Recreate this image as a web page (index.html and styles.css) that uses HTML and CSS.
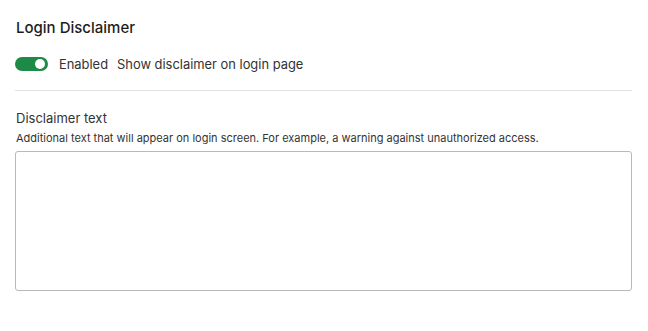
FILE: index.html
```html
<!DOCTYPE html>
<html lang="en">
<head>
    <meta charset="UTF-8">
    <title>Login Disclaimer</title>
    <link rel="stylesheet" href="styles.css">
</head>
<body>
<div class="panel">
    <h2 class="title">Login Disclaimer</h2>
    <div class="toggle-row">
        <span class="switch"><span class="knob"></span></span>
        <span class="state">Enabled</span>
        <span class="desc">Show disclaimer on login page</span>
    </div>
    <hr class="divider">
    <label class="label" for="disclaimer">Disclaimer text</label>
    <p class="help">Additional text that will appear on login screen. For example, a warning against unauthorized access.</p>
    <textarea id="disclaimer" class="field"></textarea>
</div>
</body>
</html>
```

FILE: styles.css
```css
/* reset */
body,h2,p,hr{margin:0;padding:0}
body{font-family: Inter, "Liberation Sans", sans-serif;color:#2b2b2b;background:#fff;}

.panel{
    padding:19px 16px 0 15px;
}
.title{
    font-size:15px;
    line-height:18px;
    font-weight:500;
    color:#1d1d1d;
    margin-left:1px;
}
.toggle-row{
    display:flex;
    align-items:center;
    height:20px;
    margin-top:17px;
    font-size:12.9px;
    color:#333;
}
.switch{
    width:33px;
    height:14px;
    border-radius:7px;
    background:#1e8a48;
    display:flex;
    align-items:center;
    justify-content:flex-end;
    padding-right:3px;
    box-sizing:border-box;
}
.knob{
    width:10px;
    height:10px;
    border-radius:50%;
    background:#fff;
}
.state{
    margin-left:11px;
}
.desc{
    margin-left:9px;
}
.divider{
    border:0;
    border-top:1px solid #e2e2e2;
    margin-top:16px;
}
.label{
    display:block;
    font-size:13px;
    line-height:16px;
    color:#333;
    margin-top:19px;
    margin-left:1px;
}
.help{
    font-size:11px;
    line-height:14px;
    color:#333;
    margin-top:5px;
    margin-left:1px;
}
.field{
    display:block;
    width:100%;
    height:140px;
    box-sizing:border-box;
    margin-top:6px;
    border:1px solid #b8b8b8;
    border-radius:3px;
    resize:none;
    outline:none;
}
```
